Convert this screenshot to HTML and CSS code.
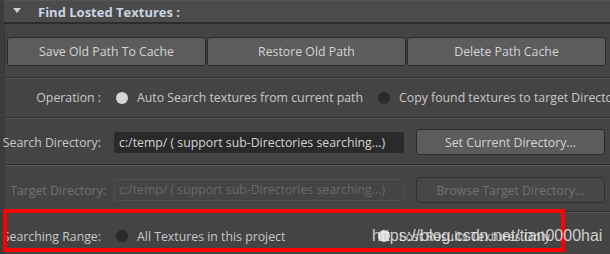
FILE: index.html
```html
<!DOCTYPE html>
<html>
<head>
<meta charset="utf-8">
<link rel="stylesheet" href="styles.css">
</head>
<body>
<div class="frame">
  <div class="header">
    <span class="tri"></span>
    <span class="title">Find Losted Textures :</span>
  </div>
  <div class="panel">
    <div class="row row-buttons">
      <div class="btn btn-tall">Save Old Path To Cache</div>
      <div class="btn btn-tall">Restore Old Path</div>
      <div class="btn btn-tall">Delete Path Cache</div>
    </div>
    <div class="row row-op sep">
      <div class="label"><span>Operation :</span></div>
      <div class="radios">
        <div class="opt"><span class="radio on"></span><span>Auto Search textures from current path</span></div>
        <div class="opt"><span class="radio"></span><span>Copy found textures to target Directory</span></div>
      </div>
    </div>
    <div class="row row-dir sep">
      <div class="label"><span>Search Directory:</span></div>
      <div class="field">c:/temp/ ( support sub-Directories searching...)</div>
      <div class="btn btn-side">Set Current Directory...</div>
    </div>
    <div class="row row-dir row-target sep disabled">
      <div class="label label-target"><span>Target Directory:</span></div>
      <div class="field">c:/temp/ ( support sub-Directories searching...)</div>
      <div class="btn btn-side">Browse Target Directory...</div>
    </div>
    <div class="row row-range sep">
      <div class="label"><span>Searching Range:</span></div>
      <div class="radios">
        <div class="opt"><span class="radio"></span><span>All Textures in this project</span></div>
        <div class="opt"><span class="radio on"></span><span>Lost Results Textures Only</span></div>
      </div>
    </div>
  </div>
</div>
<div class="annot"></div>
<div class="watermark">https://blog.csdn.net/tian0000hai</div>
</body>
</html>
```
FILE: styles.css
```css
html, body {
  margin: 0;
  padding: 0;
}
body {
  width: 610px;
  height: 254px;
  overflow: hidden;
  position: relative;
  background: #3c3c3c;
  font-family: "Open Sans", "Liberation Sans", sans-serif;
  font-size: 12.3px;
  color: #c8c8c8;
}
.frame {
  margin-left: 4px;
  width: 606px;
}
.header {
  height: 21px;
  background: #4b4b4b;
  border-top: 1px solid #565656;
  border-bottom: 2px solid #2c2c2c;
  display: flex;
  align-items: center;
}
.tri {
  width: 0;
  height: 0;
  margin-left: 9px;
  margin-top: -3px;
  border-left: 4px solid transparent;
  border-right: 4px solid transparent;
  border-top: 5px solid #d2d2d2;
}
.title {
  margin-left: 17px;
  font-weight: bold;
  font-size: 13px;
  color: #c9d4e2;
}
.panel {
  background: #444444;
  border-left: 1px solid #363636;
  height: 240px;
}
.row {
  display: flex;
  align-items: center;
  white-space: nowrap;
}
.sep {
  border-top: 1px solid #2f2f2f;
  box-shadow: inset 0 1px 0 #555555;
}
.row-buttons {
  display: grid;
  grid-template-columns: 199px 199px 199px;
  column-gap: 1px;
  padding: 13px 0 11px 2px;
}
.btn {
  box-sizing: border-box;
  background: #5c5c5c;
  border: 1px solid #2a2a2a;
  border-radius: 3px;
  color: #d4d4d4;
  display: flex;
  align-items: center;
  justify-content: center;
}
.btn-tall {
  height: 29px;
}
.row-op {
  height: 39px;
}
.label {
  width: 96px;
  flex: none;
  display: flex;
  justify-content: flex-end;
  margin-right: 13px;
}
.label span {
  flex: none;
}
.radios {
  display: grid;
  grid-template-columns: 262px 262px;
  margin-left: 2px;
}
.opt {
  display: flex;
  align-items: center;
  white-space: nowrap;
}
.radio {
  width: 12px;
  height: 12px;
  border-radius: 50%;
  background: #2a2a2a;
  margin-right: 9px;
  flex: none;
}
.radio.on {
  background: #d6d6d6;
}
.row-dir {
  height: 44px;
  padding-top: 2px;
}
.field {
  box-sizing: border-box;
  width: 290px;
  height: 21px;
  background: #2a2a2a;
  border: 1px solid #2a2a2a;
  border-radius: 2px;
  padding-left: 4px;
  line-height: 19px;
  color: #d4d4d4;
}
.btn-side {
  width: 189px;
  height: 26px;
  margin-left: 12px;
}
.row-target {
  height: 42px;
  padding-top: 4px;
}
.disabled .label {
  color: #737373;
}
.disabled .label-target {
  margin-right: 8px;
  width: 101px;
}
.disabled .field {
  background: #444444;
  border-color: #505050;
  color: #6a6a6a;
  height: 22px;
}
.disabled .btn {
  background: #474747;
  border-color: #303030;
  color: #727272;
}
.row-range {
  height: 48px;
}
.annot {
  position: absolute;
  left: 3px;
  top: 209px;
  width: 562px;
  height: 43px;
  box-sizing: border-box;
  border: 4px solid #ff0000;
}
.watermark {
  position: absolute;
  left: 372px;
  top: 227px;
  font-family: "Liberation Sans", Arial, sans-serif;
  font-size: 16px;
  line-height: 18px;
  color: rgba(240, 240, 240, 0.82);
  white-space: nowrap;
}
```
